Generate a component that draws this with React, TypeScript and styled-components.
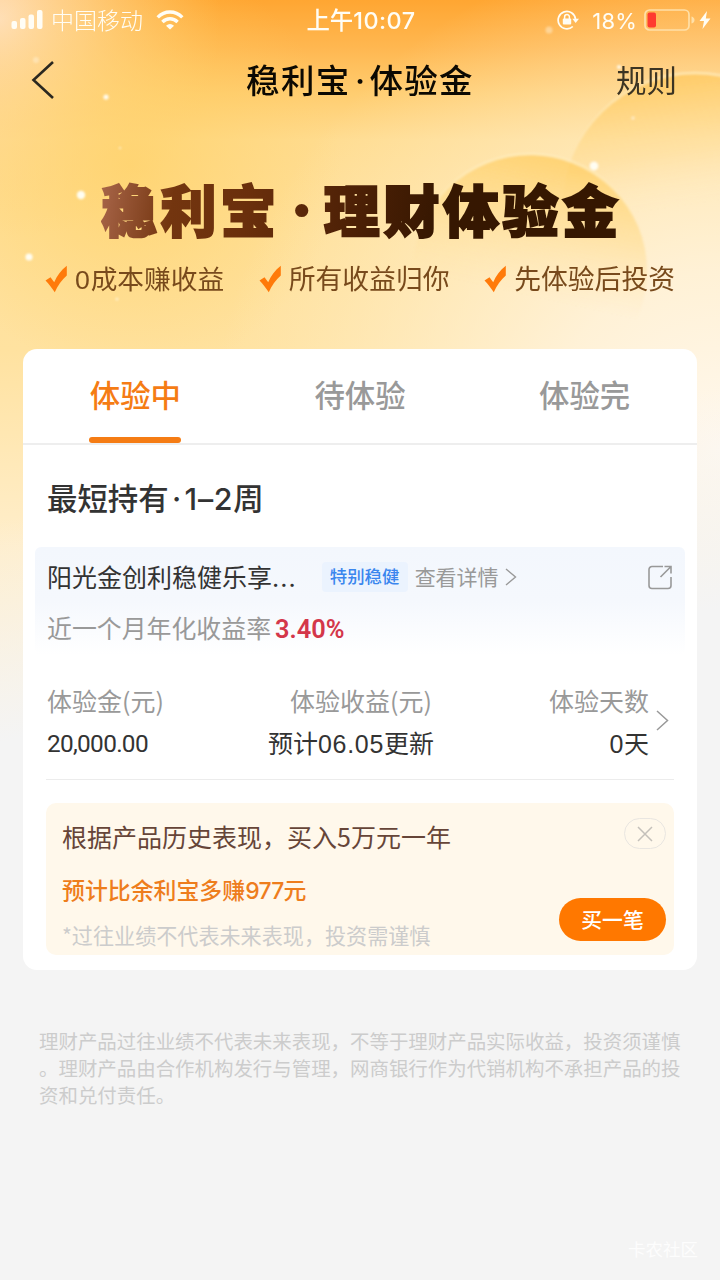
import React from "react";
import styled, { createGlobalStyle } from "styled-components";

const cjk = `"Noto Sans CJK SC", sans-serif`;

const Global = createGlobalStyle`
  * { box-sizing: border-box; }
  body { margin: 0; background: #f4f4f4; font-family: ${cjk}; }
`;

const Screen = styled.div`
  position: relative;
  width: 720px;
  height: 1280px;
  overflow: hidden;
  background: #f4f4f4;
  display: flex;
  flex-direction: column;
`;

const Backdrop = styled.svg`
  position: absolute;
  left: 0;
  top: 0;
`;

const Text = styled.span<{
  $size: number;
  $color: string;
  $weight?: number;
  $track?: number;
  $line?: number;
}>`
  display: block;
  white-space: pre;
  padding-bottom: 2px;
  font-size: ${(p) => p.$size}px;
  color: ${(p) => p.$color};
  font-weight: ${(p) => p.$weight ?? 400};
  letter-spacing: ${(p) => p.$track ?? 0}px;
  line-height: ${(p) => (p.$line ?? 36) - 2}px;
`;

const Paragraph = styled.p`
  margin: 0;
  white-space: pre;
  font-size: 19.45px;
  line-height: 27px;
  color: #ccc;
`;

const Num = styled.span<{ $family?: string; $track?: number }>`
  font-family: ${(p) => p.$family ?? "Inter"}, ${cjk};
  letter-spacing: ${(p) => p.$track ?? 0}px;
  line-height: 1;
`;

const Dot = styled.span<{ $w: number }>`
  display: inline-block;
  width: ${(p) => p.$w}px;
  font-family: Inter, ${cjk};
  letter-spacing: 0;
  line-height: 1;
  text-align: center;
`;

const StatusBar = styled.header`
  position: relative;
  height: 40px;
  display: grid;
  grid-template-columns: 1fr auto 1fr;
  align-items: center;
  padding: 0 9px 0 11px;
`;

const StatusGroup = styled.div<{ $end?: boolean }>`
  display: flex;
  align-items: center;
  justify-content: ${(p) => (p.$end ? "flex-end" : "flex-start")};
`;

const Spacer = styled.i<{ $w: number }>`
  flex: 0 0 ${(p) => p.$w}px;
`;

const NavBar = styled.nav`
  position: relative;
  height: 80px;
  display: grid;
  grid-template-columns: 1fr auto 1fr;
  align-items: center;
  padding: 0 31px;
`;

const NavAction = styled.div`
  justify-self: end;
  padding-right: 12px;
`;

const Hero = styled.section`
  position: relative;
  height: 229px;
  display: flex;
  flex-direction: column;
  padding-top: 55px;
`;

const HeroTitle = styled.h1`
  margin: 0 0 0 101px;
  align-self: flex-start;
  height: 66px;
  display: flex;
  font-size: 56px;
  line-height: 66px;
  font-weight: 900;
  letter-spacing: 3.6px;
  white-space: pre;
  color: transparent;
  -webkit-text-stroke: 2px transparent;
  background: linear-gradient(100deg, #a9664a 0, #73350f 75px, #6a2f0c 150px, #4e2106 250px, #361701 340px, #351701 100%);
  -webkit-background-clip: text;
  background-clip: text;
`;

const HeroDot = styled.span`
  width: 44px;
  padding-top: 4px;
  line-height: 62px;
  font-family: Inter, ${cjk};
  text-align: center;
  letter-spacing: 0;
`;

const Benefits = styled.div`
  display: flex;
  justify-content: space-between;
  padding: 0 45px;
  margin-top: 18px;
`;

const Benefit = styled.div`
  display: flex;
  align-items: center;
  gap: 7px;
  height: 40px;
`;

const Card = styled.main`
  position: relative;
  margin: 0 23px;
  height: 621px;
  background: #fff;
  border-radius: 14px;
  display: flex;
  flex-direction: column;
`;

const Tabs = styled.div`
  display: grid;
  grid-template-columns: repeat(3, 1fr);
  height: 96px;
  border-bottom: 2px solid #eee;
`;

const Tab = styled.div<{ $active?: boolean }>`
  display: flex;
  flex-direction: column;
  align-items: center;
  justify-content: space-between;
  padding-top: 26px;
  &::after {
    content: "";
    width: 92px;
    height: 6px;
    border-radius: 3px;
    background: ${(p) => (p.$active ? "#f57c14" : "transparent")};
  }
`;

const SectionTitle = styled.div`
  display: flex;
  height: 102px;
  padding: 31px 0 0 24px;
`;

const Product = styled.section`
  margin: 0 12px;
  height: 108px;
  border-radius: 6px;
  background: linear-gradient(#f3f7fd, #f5f8fd 50%, #fff);
  padding: 12px 12px 0 12px;
`;

const ProductRow = styled.div<{ $gap?: number }>`
  display: flex;
  align-items: center;
  height: 36px;
  margin-bottom: ${(p) => p.$gap ?? 0}px;
`;

const Tag = styled.span`
  width: 86px;
  height: 30px;
  margin: 0 7px 0 25px;
  border-radius: 4px;
  background: #ebf3fe;
  display: flex;
  justify-content: center;
  align-items: center;
`;

const Push = styled.span`
  margin-left: auto;
  display: flex;
`;

const Stats = styled.section`
  display: flex;
  height: 125px;
  margin: 0 23px;
  padding: 28px 5px 0 1px;
  border-bottom: 1px solid #ececec;
`;

const Stat = styled.div<{ $w: number; $end?: boolean }>`
  width: ${(p) => p.$w}px;
  display: flex;
  flex-direction: column;
  gap: 6px;
  align-items: ${(p) => (p.$end ? "flex-end" : "flex-start")};
`;

const StatArrow = styled.div`
  margin: 27px 0 0 auto;
`;

const Promo = styled.section`
  margin: 23px 23px 0;
  height: 152px;
  border-radius: 10px;
  background: #fff8eb;
  display: flex;
  justify-content: space-between;
  padding: 15px 8px 14px 16px;
`;

const PromoCopy = styled.div`
  display: flex;
  flex-direction: column;
`;

const PromoActions = styled.div`
  display: flex;
  flex-direction: column;
  justify-content: space-between;
  align-items: flex-end;
`;

const CloseButton = styled.button`
  width: 42px;
  height: 31px;
  padding: 0;
  border: 1px solid #e9e6e1;
  border-radius: 16px;
  background: transparent;
  display: flex;
  align-items: center;
  justify-content: center;
`;

const BuyButton = styled.button`
  width: 107px;
  height: 43px;
  padding: 0;
  border: 0;
  border-radius: 22px;
  background: #ff7800;
  font-family: ${cjk};
  display: flex;
  align-items: center;
  justify-content: center;
`;

const Disclaimer = styled.footer`
  position: relative;
  padding: 57px 39px 0;
`;

const Watermark = styled.div`
  position: absolute;
  right: 22px;
  bottom: 12px;
`;

const Chevron = ({ w, h, color, sw }: { w: number; h: number; color: string; sw: number }) => (
  <svg width={w} height={h} fill="none" stroke={color} strokeWidth={sw}>
    <path d={`M1 1L${w - 1.5} ${h / 2}L1 ${h - 1}`} />
  </svg>
);

const Check = () => (
  <svg width="23" height="28" viewBox="0 0 23 28">
    <path d="M0.5 15.5L5.5 12.2L9.2 17.2C12 11 16 5 21.8 0.8V10.5C17 15 12.5 20.5 9.8 27.3C7 23.5 4 19 0.5 15.5Z" fill="#ff7a0a" />
  </svg>
);

const sparks: [number, number, number, number][] = [
  [81, 195, 4.2, 1],
  [29, 257, 3.6, 1],
  [594, 166, 4.2, 1],
  [106, 97, 2.6, 0.95],
  [36, 60, 3, 0.35],
  [549, 30, 3.5, 0.4],
  [619, 67, 2, 0.9],
  [633, 118, 1.5, 0.6],
  [117, 299, 1.5, 0.6],
  [120, 148, 1.3, 0.5],
];

const Background = () => (
  <Backdrop width="720" height="780" viewBox="0 0 720 780">
    <defs>
      <linearGradient id="base" x1="0" y1="0" x2="0" y2="1">
        <stop offset="0" stopColor="#ffa632" />
        <stop offset="0.06" stopColor="#ffb750" />
        <stop offset="0.12" stopColor="#ffcd70" />
        <stop offset="0.18" stopColor="#ffdc90" />
        <stop offset="0.3" stopColor="#ffe09a" />
        <stop offset="0.45" stopColor="#ffe2a0" />
        <stop offset="0.7" stopColor="#ffeecb" />
        <stop offset="1" stopColor="#fff2d8" />
      </linearGradient>
      <radialGradient id="corner" gradientUnits="userSpaceOnUse" cx="0" cy="20" r="220">
        <stop offset="0" stopColor="#ffe2c0" stopOpacity="0.95" />
        <stop offset="0.4" stopColor="#ffdda6" stopOpacity="0.65" />
        <stop offset="1" stopColor="#ffd580" stopOpacity="0" />
      </radialGradient>
      <radialGradient id="warm" gradientUnits="userSpaceOnUse" cx="130" cy="165" r="210">
        <stop offset="0" stopColor="#ffd062" stopOpacity="0.65" />
        <stop offset="1" stopColor="#ffd062" stopOpacity="0" />
      </radialGradient>
      <radialGradient id="pale" gradientUnits="userSpaceOnUse" cx="720" cy="450" r="510">
        <stop offset="0" stopColor="#fff8ee" />
        <stop offset="0.35" stopColor="#fff4e0" stopOpacity="0.85" />
        <stop offset="1" stopColor="#fff0d0" stopOpacity="0" />
      </radialGradient>
      <linearGradient id="orb" x1="0.65" y1="0" x2="0.45" y2="0.9">
        <stop offset="0" stopColor="#ffcb5c" stopOpacity="0.75" />
        <stop offset="0.35" stopColor="#ffd67a" stopOpacity="0.4" />
        <stop offset="0.68" stopColor="#ffe09c" stopOpacity="0" />
      </linearGradient>
      <linearGradient id="farOrb" x1="0.4" y1="0" x2="0.55" y2="1">
        <stop offset="0" stopColor="#ffc654" stopOpacity="0.65" />
        <stop offset="0.3" stopColor="#ffd886" stopOpacity="0.35" />
        <stop offset="0.5" stopColor="#ffe9bc" stopOpacity="0" />
      </linearGradient>
      <linearGradient id="rim" x1="0" y1="0" x2="0" y2="1">
        <stop offset="0" stopColor="#fff0c4" stopOpacity="0.7" />
        <stop offset="0.35" stopColor="#fff0c4" stopOpacity="0" />
      </linearGradient>
      <linearGradient id="fade" gradientUnits="userSpaceOnUse" x1="0" y1="520" x2="40" y2="735">
        <stop offset="0" stopColor="#f4f4f4" stopOpacity="0" />
        <stop offset="1" stopColor="#f4f4f4" />
      </linearGradient>
      <filter id="soft" x="-50%" y="-50%" width="200%" height="200%">
        <feGaussianBlur stdDeviation="1" />
      </filter>
    </defs>
    <rect width="720" height="780" fill="url(#base)" />
    <rect width="720" height="780" fill="url(#corner)" />
    <rect width="720" height="780" fill="url(#warm)" />
    <rect width="720" height="780" fill="url(#pale)" />
    <rect width="720" height="780" fill="url(#fade)" />
    <g filter="url(#soft)">
      <circle cx="695" cy="205" r="132" fill="url(#farOrb)" stroke="url(#rim)" strokeWidth="2.5" />
      <circle cx="530" cy="271" r="117" fill="url(#orb)" stroke="url(#rim)" strokeWidth="2.5" />
      {sparks.map(([x, y, r, o]) => (
        <circle key={`${x}-${y}`} cx={x} cy={y} r={r} fill="#fffdf2" opacity={o} />
      ))}
    </g>
  </Backdrop>
);

const SignalIcon = () => (
  <svg width="33" height="20" fill="#fffdf5">
    <rect x="0.5" y="11" width="5.5" height="8" rx="2" />
    <rect x="9" y="8" width="5.5" height="11" rx="2" />
    <rect x="17.5" y="4.5" width="5.5" height="14.5" rx="2" />
    <rect x="26" y="0" width="5.5" height="19" rx="2" />
  </svg>
);

const WifiIcon = () => (
  <svg width="28" height="20" viewBox="0 0 28 20" fill="none" stroke="#fffdf5" strokeWidth="3.4">
    <path d="M1.7 7.4C8.7 0.2 19.3 0.2 26.3 7.4" />
    <path d="M6.4 12C10.8 7.7 17.2 7.7 21.6 12" />
    <path d="M10 15.7Q14 12.2 18 15.7L14 19.6Z" fill="#fffdf5" stroke="none" />
  </svg>
);

const LockIcon = () => (
  <svg width="22" height="20" viewBox="0 0 22 20" fill="none" stroke="#fffdf5" strokeWidth="1.7">
    <path d="M18.5 9.2A8.7 8.7 0 1 0 15.8 16.5" />
    <path d="M15.3 8.8H22L18.7 13Z" fill="#fffdf5" stroke="none" />
    <rect x="5.8" y="8.6" width="8.4" height="6" rx="1" fill="#fffdf5" stroke="none" />
    <path d="M7.6 9V7A2.4 2.4 0 0 1 12.4 7V9" strokeWidth="1.5" />
  </svg>
);

const BatteryIcon = () => (
  <svg width="51" height="22" viewBox="0 0 51 22">
    <rect x="1" y="1" width="44" height="20" rx="4.5" fill="none" stroke="#ffe0a8" strokeWidth="1.7" />
    <rect x="3.5" y="3.5" width="8.5" height="15" rx="2" fill="#ff3b2f" />
    <path d="M47.5 7.5Q50.5 8.5 50.5 11T47.5 14.5Z" fill="#ffe0a8" />
  </svg>
);

const App = () => (
  <Screen>
    <Global />
    <Background />
    <StatusBar>
      <StatusGroup>
        <SignalIcon />
        <Spacer $w={7} />
        <Text $size={23} $color="#fffdf5" $weight={300}>中国移动</Text>
        <Spacer $w={13} />
        <WifiIcon />
      </StatusGroup>
      <Text $size={23.4} $color="#fffdf5" $weight={500}>上午<Num $track={0.5}>10:07</Num></Text>
      <StatusGroup $end>
        <LockIcon />
        <Spacer $w={13} />
        <Text $size={22} $color="#fffdf5"><Num $track={0.2}>18%</Num></Text>
        <Spacer $w={7} />
        <BatteryIcon />
        <Spacer $w={4} />
        <svg width="12" height="18" viewBox="0 0 12 18" fill="#fffdf5">
          <path d="M8 0L0.5 10H5L3.5 18L11.5 7.5H6.8Z" />
        </svg>
      </StatusGroup>
    </StatusBar>
    <NavBar>
      <svg width="24" height="38" fill="none" stroke="#2b2820" strokeWidth="2.6">
        <path d="M22 1L2.5 19L22 37" />
      </svg>
      <Text $size={33.5} $color="#0c0902" $weight={500} $track={1.3} $line={50}>稳利宝<Dot $w={19}>·</Dot>体验金</Text>
      <NavAction>
        <Text $size={30.5} $color="#3c3423" $line={46}>规则</Text>
      </NavAction>
    </NavBar>
    <Hero>
      <HeroTitle>稳利宝<HeroDot>·</HeroDot>理财体验金</HeroTitle>
      <Benefits>
        <Benefit>
          <Check />
          <Text $size={26.7} $color="#784a1c" $line={40}><Num $family="Liberation Sans" $track={0.8}>0</Num>成本赚收益</Text>
        </Benefit>
        {["所有收益归你", "先体验后投资"].map((label) => (
          <Benefit key={label}>
            <Check />
            <Text $size={26.8} $color="#784a1c" $line={40}>{label}</Text>
          </Benefit>
        ))}
      </Benefits>
    </Hero>
    <Card>
      <Tabs>
        <Tab $active><Text $size={30.4} $color="#f57c14" $weight={500} $line={40}>体验中</Text></Tab>
        <Tab><Text $size={30.4} $color="#999" $weight={500} $line={40}>待体验</Text></Tab>
        <Tab><Text $size={30.4} $color="#999" $weight={500} $line={40}>体验完</Text></Tab>
      </Tabs>
      <SectionTitle>
        <Text $size={30.4} $color="#333" $weight={500} $line={44}>最短持有<Dot $w={16}>·</Dot><Num $track={0.7}>1–2</Num>周</Text>
      </SectionTitle>
      <Product>
        <ProductRow $gap={15}>
          <Text $size={25} $color="#333">阳光金创利稳健乐享<Num $track={1}>...</Num></Text>
          <Tag><Text $size={17.4} $color="#3a86ee" $weight={500} $line={28}>特别稳健</Text></Tag>
          <Text $size={21} $color="#999">查看详情</Text>
          <Spacer $w={6} />
          <Chevron w={12} h={18} color="#999" sw={1.4} />
          <Push>
            <svg width="25" height="25" fill="none" stroke="#999" strokeWidth="1.6">
              <path d="M15 1.5H4A3 3 0 0 0 1 4.5V20.5A3 3 0 0 0 4 23.5H20A3 3 0 0 0 23 20.5V12M16.5 1.5H23V8.5M23 1.5L12.5 12" />
            </svg>
          </Push>
        </ProductRow>
        <ProductRow>
          <Text $size={24.9} $color="#999">近一个月年化收益率</Text>
          <Spacer $w={4} />
          <Text $size={25.4} $color="#d4374a" $weight={600}><Num $family="Roboto">3.40%</Num></Text>
        </ProductRow>
      </Product>
      <Stats>
        <Stat $w={200}>
          <Text $size={25} $color="#999">体验金(元)</Text>
          <Text $size={24.4} $color="#333"><Num $family="Roboto" $track={-0.7}>20,000.00</Num></Text>
        </Stat>
        <Stat $w={187} $end>
          <Text $size={25} $color="#999">体验收益(元<Num $family={'"Noto Sans CJK SC"'} $track={2}>)</Num></Text>
          <Text $size={25} $color="#333">预计<Num $family="Liberation Sans" $track={0.7}>06.05</Num>更新</Text>
        </Stat>
        <Stat $w={215} $end>
          <Text $size={25} $color="#999">体验天数</Text>
          <Text $size={25} $color="#333"><Num $family="Liberation Sans" $track={0.7}>0</Num>天</Text>
        </Stat>
        <StatArrow><Chevron w={13} h={21} color="#999" sw={1.5} /></StatArrow>
      </Stats>
      <Promo>
        <PromoCopy>
          <Text $size={25} $color="#664538" $line={38}>根据产品历史表现，买入5万元一年</Text>
          <Text $size={22.9} $color="#ee7d1c" $weight={500} $line={68}>预计比余利宝多赚<Num $track={-0.7}>977</Num>元</Text>
          <Text $size={21.1} $color="#ccc" $line={24}>*过往业绩不代表未来表现，投资需谨慎</Text>
        </PromoCopy>
        <PromoActions>
          <CloseButton>
            <svg width="16" height="16" stroke="#c4c0ba" strokeWidth="1.5">
              <path d="M1 1L15 15M15 1L1 15" />
            </svg>
          </CloseButton>
          <BuyButton><Text $size={20.8} $color="#fff" $weight={500} $line={30}>买一笔</Text></BuyButton>
        </PromoActions>
      </Promo>
    </Card>
    <Disclaimer>
      <Paragraph>
        {"理财产品过往业绩不代表未来表现，不等于理财产品实际收益，投资须谨慎\n。理财产品由合作机构发行与管理，网商银行作为代销机构不承担产品的投\n资和兑付责任。"}
      </Paragraph>
    </Disclaimer>
    <Watermark>
      <Text $size={17.5} $color="rgba(255,255,255,.85)">卡农社区</Text>
    </Watermark>
  </Screen>
);

export default App;
